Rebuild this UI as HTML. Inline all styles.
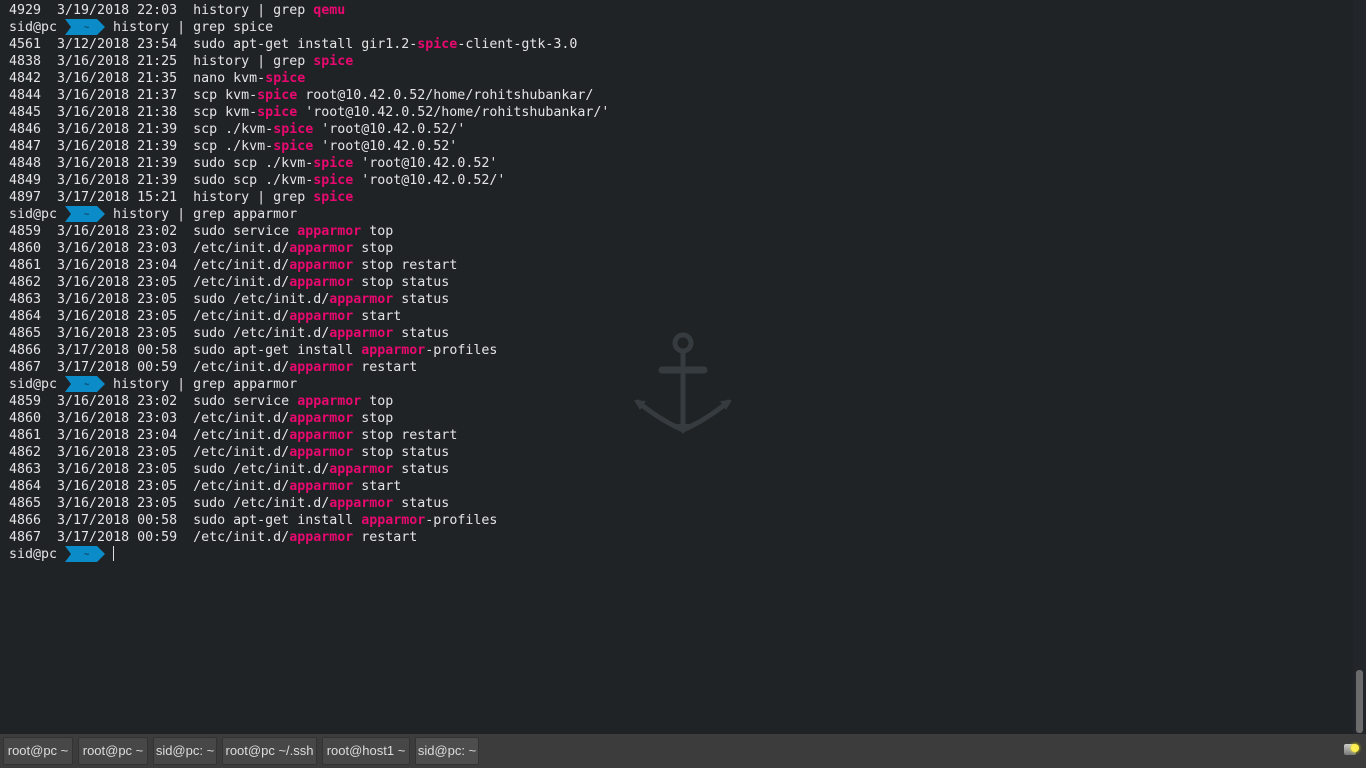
<!DOCTYPE html>
<html><head><meta charset="utf-8"><style>
html,body{margin:0;padding:0;width:1366px;height:768px;overflow:hidden;background:#1f2326;}
#term{position:absolute;left:9px;top:2px;font-family:"DejaVu Sans Mono","Liberation Mono",monospace;font-size:13.3px;line-height:17px;color:#e4e4e4;white-space:pre;letter-spacing:0;}
.p{color:#e8086f;font-weight:bold;}
.ar{display:inline-block;width:40px;height:0;position:relative;}
.ar svg{position:absolute;left:0;top:-12px;}
.cur{display:inline-block;width:1px;height:0;position:relative;}
.cur:after{content:"";position:absolute;left:0;top:-12px;width:1px;height:15px;background:#ddd;}
#bar{position:absolute;left:0;top:734px;width:1366px;height:34px;background:#3c3c3c;}
.b{position:absolute;top:3px;height:28px;background:#474747;border:1px solid #333;border-radius:2px;box-sizing:border-box;color:#dcdcdc;font-family:"Liberation Sans","DejaVu Sans",sans-serif;font-size:13px;line-height:26px;text-align:center;}
#sb{position:absolute;left:1353px;top:0;width:13px;height:734px;background:#22262a;z-index:5;}
#th{position:absolute;left:3px;top:670px;width:7px;height:63px;background:#6b6b6b;border-radius:3px;}
</style></head><body>
<div id="term">4929  3/19/2018 22:03  history | grep <span class="p">qemu</span>
sid@pc <span class="ar"><svg width="40" height="16"><polygon points="0,0 32,0 40,8 32,16 0,16 6,8" fill="#0b8cc8"/><text x="19" y="11" font-size="9" fill="#123" font-family="DejaVu Sans Mono">~</text></svg></span> history | grep spice
4561  3/12/2018 23:54  sudo apt-get install gir1.2-<span class="p">spice</span>-client-gtk-3.0
4838  3/16/2018 21:25  history | grep <span class="p">spice</span>
4842  3/16/2018 21:35  nano kvm-<span class="p">spice</span>
4844  3/16/2018 21:37  scp kvm-<span class="p">spice</span> root@10.42.0.52/home/rohitshubankar/
4845  3/16/2018 21:38  scp kvm-<span class="p">spice</span> 'root@10.42.0.52/home/rohitshubankar/'
4846  3/16/2018 21:39  scp ./kvm-<span class="p">spice</span> 'root@10.42.0.52/'
4847  3/16/2018 21:39  scp ./kvm-<span class="p">spice</span> 'root@10.42.0.52'
4848  3/16/2018 21:39  sudo scp ./kvm-<span class="p">spice</span> 'root@10.42.0.52'
4849  3/16/2018 21:39  sudo scp ./kvm-<span class="p">spice</span> 'root@10.42.0.52/'
4897  3/17/2018 15:21  history | grep <span class="p">spice</span>
sid@pc <span class="ar"><svg width="40" height="16"><polygon points="0,0 32,0 40,8 32,16 0,16 6,8" fill="#0b8cc8"/><text x="19" y="11" font-size="9" fill="#123" font-family="DejaVu Sans Mono">~</text></svg></span> history | grep apparmor
4859  3/16/2018 23:02  sudo service <span class="p">apparmor</span> top
4860  3/16/2018 23:03  /etc/init.d/<span class="p">apparmor</span> stop
4861  3/16/2018 23:04  /etc/init.d/<span class="p">apparmor</span> stop restart
4862  3/16/2018 23:05  /etc/init.d/<span class="p">apparmor</span> stop status
4863  3/16/2018 23:05  sudo /etc/init.d/<span class="p">apparmor</span> status
4864  3/16/2018 23:05  /etc/init.d/<span class="p">apparmor</span> start
4865  3/16/2018 23:05  sudo /etc/init.d/<span class="p">apparmor</span> status
4866  3/17/2018 00:58  sudo apt-get install <span class="p">apparmor</span>-profiles
4867  3/17/2018 00:59  /etc/init.d/<span class="p">apparmor</span> restart
sid@pc <span class="ar"><svg width="40" height="16"><polygon points="0,0 32,0 40,8 32,16 0,16 6,8" fill="#0b8cc8"/><text x="19" y="11" font-size="9" fill="#123" font-family="DejaVu Sans Mono">~</text></svg></span> history | grep apparmor
4859  3/16/2018 23:02  sudo service <span class="p">apparmor</span> top
4860  3/16/2018 23:03  /etc/init.d/<span class="p">apparmor</span> stop
4861  3/16/2018 23:04  /etc/init.d/<span class="p">apparmor</span> stop restart
4862  3/16/2018 23:05  /etc/init.d/<span class="p">apparmor</span> stop status
4863  3/16/2018 23:05  sudo /etc/init.d/<span class="p">apparmor</span> status
4864  3/16/2018 23:05  /etc/init.d/<span class="p">apparmor</span> start
4865  3/16/2018 23:05  sudo /etc/init.d/<span class="p">apparmor</span> status
4866  3/17/2018 00:58  sudo apt-get install <span class="p">apparmor</span>-profiles
4867  3/17/2018 00:59  /etc/init.d/<span class="p">apparmor</span> restart
sid@pc <span class="ar"><svg width="40" height="16"><polygon points="0,0 32,0 40,8 32,16 0,16 6,8" fill="#0b8cc8"/><text x="19" y="11" font-size="9" fill="#123" font-family="DejaVu Sans Mono">~</text></svg></span> <span class="cur"></span></div>

<svg style="position:absolute;left:620px;top:320px" width="130" height="130" viewBox="0 0 130 130">
<g fill="none" stroke="#363b40" stroke-width="5" stroke-linecap="round">
<circle cx="63" cy="23" r="8"/>
<line x1="63" y1="31" x2="63" y2="105"/>
<line x1="42" y1="50" x2="84" y2="50" stroke-width="7"/>
<path d="M18 82 Q40 100 63 110 Q86 100 108 82"/>
</g>
<polygon points="14,80 26,81 20,90" fill="#363b40"/>
<polygon points="112,80 100,81 106,90" fill="#363b40"/>
<polygon points="55,104 71,104 63,114" fill="#363b40"/>
</svg>

<div id="sb"><div id="th"></div></div>
<div id="bar">
<div class="b" style="left:3px;width:70px">root@pc ~</div>
<div class="b" style="left:78px;width:70px">root@pc ~</div>
<div class="b" style="left:153px;width:64px">sid@pc: ~</div>
<div class="b" style="left:222px;width:95px">root@pc ~/.ssh</div>
<div class="b" style="left:322px;width:88px">root@host1 ~</div>
<div class="b" style="left:415px;width:64px;background:#4d4d4d">sid@pc: ~</div>
<div style="position:absolute;left:1344px;top:10px;width:12px;height:11px;background:linear-gradient(#ccc,#777);border-radius:2px"></div>
<div style="position:absolute;left:1351px;top:10px;width:8px;height:8px;background:#ffef50;border-radius:50%;box-shadow:0 0 3px #ff0"></div>
</div>
</body></html>
